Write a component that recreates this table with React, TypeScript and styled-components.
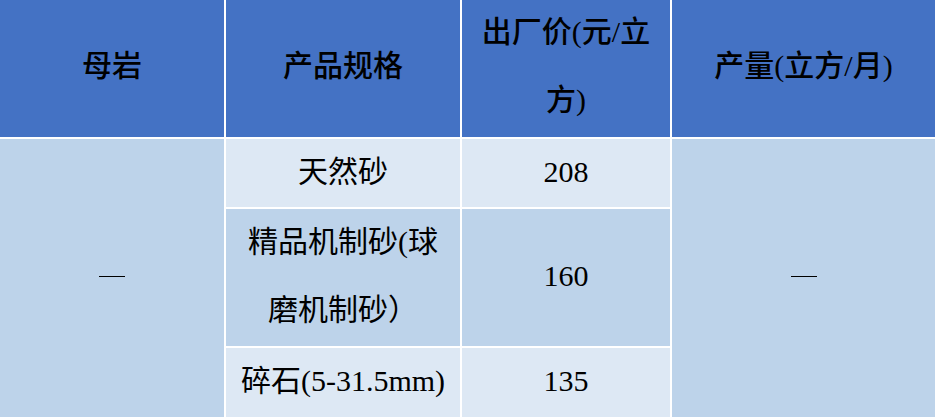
import React from 'react';
import styled, { createGlobalStyle } from 'styled-components';

const GlobalStyle = createGlobalStyle`
  html, body {
    margin: 0;
    padding: 0;
    background: #ffffff;
  }
`;

const Grid = styled.div`
    display: grid;
    grid-template-columns: 224px 234px 208px 1fr;
    grid-template-rows: 137px 68px 137px 69px;
    gap: 2px;
    width: 935px;
    height: 417px;
    overflow: hidden;
    background-color: #ffffff;
    font-family: "Liberation Serif", "Noto Sans CJK SC", serif;
    color: #000000;
`;

const HeadCell = styled.div`
    display: flex;
    align-items: center;
    justify-content: center;
    text-align: center;
    padding: 0 10px 5px;
    background-color: #4472c4;
    font-size: 30px;
    font-weight: 500;
    line-height: 68px;
`;

interface BodyCellProps {
  readonly $tone: 'light' | 'dark';
  readonly $rows?: number;
}

const BodyCell = styled.div<BodyCellProps>`
    display: flex;
    align-items: center;
    justify-content: center;
    text-align: center;
    padding: 0 8px 3px;
    background-color: ${props => (props.$tone === 'light' ? '#dde8f4' : '#bdd3ea')};
    grid-row: ${props => (props.$rows ? `span ${props.$rows}` : 'auto')};
    font-size: 30px;
    line-height: 68px;
`;

const Dash = styled.span`
    display: inline-block;
    width: 26px;
    height: 1px;
    background-color: #000000;
`;

const rows = [
  { spec: <>天然砂</>, price: '208', tone: 'light' as const },
  { spec: <>精品机制砂(球<br />磨机制砂）</>, price: '160', tone: 'dark' as const },
  { spec: <>碎石(5-31.5mm)</>, price: '135', tone: 'light' as const },
];

const App = () => (
  <>
    <GlobalStyle />
    <Grid>
      <HeadCell>母岩</HeadCell>
      <HeadCell>产品规格</HeadCell>
      <HeadCell>出厂价(元/立方)</HeadCell>
      <HeadCell>产量(立方/月)</HeadCell>

      {rows.map((row, index) => (
        <React.Fragment key={index}>
          {index === 0 && (
            <BodyCell $tone="dark" $rows={3} style={{ gridColumn: 1 }}>
              <Dash />
            </BodyCell>
          )}
          <BodyCell $tone={row.tone}>
            <span>{row.spec}</span>
          </BodyCell>
          <BodyCell $tone={row.tone}>{row.price}</BodyCell>
          {index === 0 && (
            <BodyCell $tone="dark" $rows={3}>
              <Dash />
            </BodyCell>
          )}
        </React.Fragment>
      ))}
    </Grid>
  </>
);

export default App;
